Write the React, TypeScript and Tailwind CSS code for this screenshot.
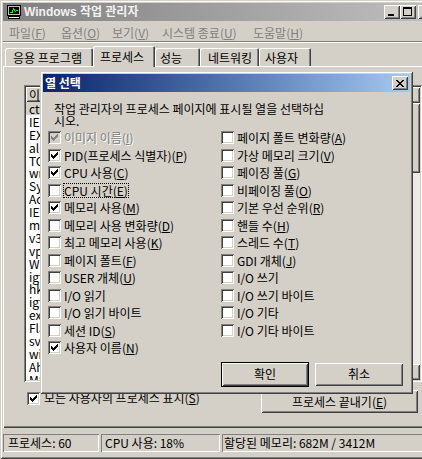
import React from "react";

const RAISED =
  "shadow-[inset_1px_1px_#ffffff,inset_-1px_-1px_#404040,inset_2px_2px_#d4d0c8,inset_-2px_-2px_#808080]";
const SUNKEN =
  "shadow-[inset_1px_1px_#808080,inset_-1px_-1px_#ffffff,inset_2px_2px_#404040,inset_-2px_-2px_#d4d0c8]";
const FRAME =
  "shadow-[inset_1px_1px_#d4d0c8,inset_-1px_-1px_#404040,inset_2px_2px_#ffffff,inset_-2px_-2px_#808080]";
const THIN = "shadow-[inset_1px_1px_#808080,inset_-1px_-1px_#ffffff]";

const CHECK = ["......X", ".....XX", "X...XXX", "XX.XXX.", "XXXXX..", ".XXX...", "..X...."];
const CROSS = ["XX....XX", ".XX..XX.", "..XXXX..", "...XX...", "..XXXX..", ".XX..XX.", "XX....XX"];

function Pixels({ rows, color = "#000" }: { rows: string[]; color?: string }) {
  const w = rows[0].length;
  return (
    <svg width={w} height={rows.length} viewBox={`0 0 ${w} ${rows.length}`} shapeRendering="crispEdges">
      {rows.flatMap((r, y) =>
        r.split("").map((c, x) =>
          c === "X" ? <rect key={`${x}-${y}`} x={x} y={y} width={1} height={1} fill={color} /> : null
        )
      )}
    </svg>
  );
}

function Check({ checked, disabled }: { checked?: boolean; disabled?: boolean }) {
  return (
    <span
      className={`flex h-[13px] w-[13px] shrink-0 items-center justify-center ${
        disabled ? "bg-[#d4d0c8]" : "bg-white"
      } ${SUNKEN}`}
    >
      {checked && <Pixels rows={CHECK} color={disabled ? "#808080" : "#000"} />}
    </span>
  );
}

function Label({ t, k }: { t: string; k?: string }) {
  return (
    <>
      {t}
      {k && (
        <>
          (<span className="underline underline-offset-[1px]">{k}</span>)
        </>
      )}
    </>
  );
}

type Opt = { t: string; k?: string; checked?: boolean; disabled?: boolean; focus?: boolean };

const leftCols: Opt[] = [
  { t: "이미지 이름", k: "I", checked: true, disabled: true },
  { t: "PID(프로세스 식별자)", k: "P", checked: true },
  { t: "CPU 사용", k: "C", checked: true },
  { t: "CPU 시간", k: "E", focus: true },
  { t: "메모리 사용", k: "M", checked: true },
  { t: "메모리 사용 변화량", k: "D" },
  { t: "최고 메모리 사용", k: "K" },
  { t: "페이지 폴트", k: "F" },
  { t: "USER 개체", k: "U" },
  { t: "I/O 읽기" },
  { t: "I/O 읽기 바이트" },
  { t: "세션 ID", k: "S" },
  { t: "사용자 이름", k: "N", checked: true },
];

const rightCols: Opt[] = [
  { t: "페이지 폴트 변화량", k: "A" },
  { t: "가상 메모리 크기", k: "V" },
  { t: "페이징 풀", k: "G" },
  { t: "비페이징 풀", k: "O" },
  { t: "기본 우선 순위", k: "R" },
  { t: "핸들 수", k: "H" },
  { t: "스레드 수", k: "T" },
  { t: "GDI 개체", k: "J" },
  { t: "I/O 쓰기" },
  { t: "I/O 쓰기 바이트" },
  { t: "I/O 기타" },
  { t: "I/O 기타 바이트" },
];

const procs = [
  "ctfmon.exe", "IEXPLORE.EXE", "EXCEL.EXE", "alg.exe", "TOTALCMD.EXE", "wmiprvse.exe",
  "System", "AcroTray.exe", "IEXPLORE.EXE", "msmsgs.exe", "v3lmedic.exe", "vptray.exe",
  "WINWORD.EXE", "igfxtray.exe", "hkcmd.exe", "igfxpers.exe", "explorer.exe", "FlashGet.exe",
  "svchost.exe", "winlogon.exe", "Ahnlab.exe", "MSASCui.exe",
];

const menus = [
  { t: "파일", k: "F", w: "w-[52px]" },
  { t: "옵션", k: "O", w: "w-[51px]" },
  { t: "보기", k: "V", w: "w-[50px]" },
  { t: "시스템 종료", k: "U", w: "w-[91px]" },
  { t: "도움말", k: "H", w: "w-auto" },
];

const tabs = [
  { t: "응용 프로그램", w: "w-[88px]", pl: "pl-[8px]" },
  { t: "프로세스", w: "w-[62px]", pl: "pl-[7px]", active: true },
  { t: "성능", w: "w-[45px]", pl: "pl-[5px]" },
  { t: "네트워킹", w: "w-[59px]", pl: "pl-[8px]" },
  { t: "사용자", w: "w-[52px]", pl: "pl-[6px]" },
];

function OptRow({ o }: { o: Opt }) {
  return (
    <div className="flex h-[17.5px] items-center gap-[3px]">
      <Check checked={o.checked} disabled={o.disabled} />
      <span
        className={`whitespace-nowrap leading-[13px] ${
          o.disabled ? "text-[#808080] [text-shadow:1px_1px_#ffffff]" : ""
        } ${o.focus ? "outline outline-1 outline-dotted outline-black" : ""}`}
      >
        <Label t={o.t} k={o.k} />
      </span>
    </div>
  );
}

const App: React.FC = () => {
  return (
    <div className="relative h-[459px] w-[422px] overflow-hidden bg-[#d4d0c8] font-['Noto_Sans_CJK_KR',sans-serif] text-[12px] leading-[14px] text-black">
      {/* Task manager window */}
      <div className={`flex h-[459px] w-[440px] flex-col p-[3px] ${FRAME}`}>
        {/* Title bar (inactive) */}
        <div className="flex h-[18px] shrink-0 items-center bg-gradient-to-r from-[#808080] to-[#c0c0c0] pl-[3px] pr-[3px]">
          <svg width="16" height="16" viewBox="0 0 16 16" shapeRendering="crispEdges">
            <rect x="1.5" y="1.5" width="13" height="10" fill="#c0c0c0" stroke="#000" />
            <rect x="3" y="3" width="10" height="7" fill="#000" />
            <polyline points="3.5,8.5 6,8.5 7.5,4.5 9.5,7.5 12.5,5.5" fill="none" stroke="#00ff00" />
            <rect x="2.5" y="12.5" width="11" height="2" fill="#fff" stroke="#000" />
          </svg>
          <span className="ml-[2px] whitespace-nowrap font-['Liberation_Sans','Noto_Sans_CJK_KR',sans-serif] font-bold text-[#f2f2f2]">
            Windows 작업 관리자
          </span>
          <div className="ml-auto flex">
            <div className={`flex h-[14px] w-[16px] items-end justify-center bg-[#d4d0c8] pb-[3px] ${RAISED}`}>
              <div className="ml-[-2px] h-[2px] w-[6px] bg-black" />
            </div>
            <div className={`flex h-[14px] w-[16px] items-center justify-center bg-[#d4d0c8] ${RAISED}`}>
              <div className="ml-[-1px] mt-[-1px] h-[9px] w-[9px] border border-t-2 border-black" />
            </div>
            <div className={`ml-[2px] flex h-[14px] w-[16px] items-center justify-center bg-[#d4d0c8] ${RAISED}`}>
              <Pixels rows={CROSS} />
            </div>
          </div>
        </div>

        {/* Menu bar (disabled while the dialog is open) */}
        <div className="flex h-[20px] shrink-0 items-center pl-[6px] pt-[3px] text-[#808080]">
          {menus.map((m) => (
            <span key={m.t} className={`whitespace-nowrap ${m.w}`}>
              <Label t={m.t} k={m.k} />
            </span>
          ))}
        </div>
        <div className="h-[2px] shrink-0 border-t border-b border-t-[#808080] border-b-white" />

        {/* Tabs */}
        <div className="flex h-[23px] shrink-0 items-end pl-[2px] pt-[3px]">
          {tabs.map((t) =>
            t.active ? (
              <div
                key={t.t}
                className={`relative z-10 mb-[-1px] flex h-[21px] ${t.w} ${t.pl} items-center rounded-tl-[2px] rounded-tr-[2px] bg-[#d4d0c8] shadow-[inset_1px_1px_#ffffff,inset_-1px_0_#404040,inset_-2px_0_#808080]`}
              >
                {t.t}
              </div>
            ) : (
              <div
                key={t.t}
                className={`flex h-[18px] ${t.w} ${t.pl} items-center whitespace-nowrap rounded-tl-[2px] rounded-tr-[2px] pt-[2px] shadow-[inset_1px_1px_#ffffff,inset_-1px_0_#404040,inset_-2px_0_#808080]`}
              >
                {t.t}
              </div>
            )
          )}
        </div>

        {/* Tab page */}
        <div className="flex h-[362px] shrink-0 flex-col pl-[21px] pt-[19px] shadow-[inset_1px_1px_#ffffff,inset_-1px_-1px_#404040,inset_-2px_-2px_#808080]">
          <div className={`flex h-[297px] w-[398px] bg-white p-[2px] ${SUNKEN}`}>
            <div className="flex min-w-0 flex-1 flex-col overflow-hidden">
              <div className="flex h-[15px] shrink-0">
                <div className={`flex w-[110px] items-center bg-[#d4d0c8] pl-[3px] ${RAISED}`}>이미지 이름</div>
                <div className={`flex w-[60px] items-center bg-[#d4d0c8] pl-[3px] ${RAISED}`}>PID</div>
                <div className={`flex flex-1 items-center bg-[#d4d0c8] ${RAISED}`} />
              </div>
              {procs.map((p, i) => (
                <div
                  key={i}
                  className={`flex h-[12.9px] shrink-0 items-center whitespace-nowrap pl-[3px] leading-[13px] ${
                    i === 0 ? "bg-[#d4d0c8]" : ""
                  }`}
                >
                  <span className="w-[110px]">{p}</span>
                </div>
              ))}
            </div>
            {/* Scrollbar */}
            <div className="flex w-[16px] shrink-0 flex-col bg-[#ecebe7]">
              <div className={`h-[16px] bg-[#d4d0c8] ${RAISED}`} />
              <div className={`h-[70px] bg-[#d4d0c8] ${RAISED}`} />
              <div className="flex-1" />
              <div className={`h-[16px] bg-[#d4d0c8] ${RAISED}`} />
            </div>
          </div>

          <div className="mt-[8px] flex h-[23px] w-[398px] items-start">
            <div className="ml-[3px] mt-[2px]">
              <Check checked />
            </div>
            <span className="ml-[4px] mt-[1px] whitespace-nowrap">
              <Label t="모든 사용자의 프로세스 표시" k="S" />
            </span>
            <div
              className={`ml-auto mr-[4px] flex h-[23px] w-[157px] items-center justify-center bg-[#d4d0c8] ${RAISED}`}
            >
              <Label t="프로세스 끝내기" k="E" />
            </div>
          </div>
        </div>

        {/* Status bar */}
        <div className="mt-[6px] flex h-[18px] shrink-0 gap-[2px]">
          <div className={`flex w-[96px] items-center pl-[5px] ${THIN}`}>프로세스: 60</div>
          <div className={`flex w-[119px] items-center pl-[4px] ${THIN}`}>CPU 사용: 18%</div>
          <div className={`flex flex-1 items-center pl-[2px] ${THIN}`}>할당된 메모리: 682M / 3412M</div>
        </div>
      </div>

      {/* Modal dialog: 열 선택 */}
      <div className={`absolute left-[40px] top-[71px] flex h-[323px] w-[373px] flex-col bg-[#d4d0c8] p-[3px] ${FRAME}`}>
        <div className="flex h-[18px] shrink-0 items-center bg-gradient-to-r from-[#0a246a] to-[#a6caf0] pl-[2px] pr-[2px]">
          <span className="font-bold text-white">열 선택</span>
          <div className={`ml-auto flex h-[14px] w-[16px] items-center justify-center bg-[#d4d0c8] ${RAISED}`}>
            <Pixels rows={CROSS} />
          </div>
        </div>

        <div className="pl-[11px] pt-[11px] leading-[12px]">
          작업 관리자의 프로세스 페이지에 표시될 열을 선택하십
          <br />
          시오.
        </div>

        <div className="mt-[2px] grid grid-cols-[173px_1fr] pl-[5px]">
          <div className="flex flex-col">
            {leftCols.map((o) => (
              <OptRow key={o.t} o={o} />
            ))}
          </div>
          <div className="flex flex-col">
            {rightCols.map((o) => (
              <OptRow key={o.t} o={o} />
            ))}
          </div>
        </div>

        <div className="mt-[5px] flex h-[25px] items-center justify-end gap-[6px] pr-[7px]">
          <div className="h-[25px] w-[88px] border border-black">
            <div className={`flex h-full w-full items-center justify-center bg-[#d4d0c8] ${RAISED}`}>확인</div>
          </div>
          <div className={`flex h-[23px] w-[88px] items-center justify-center bg-[#d4d0c8] ${RAISED}`}>취소</div>
        </div>
      </div>
    </div>
  );
};

export default App;
